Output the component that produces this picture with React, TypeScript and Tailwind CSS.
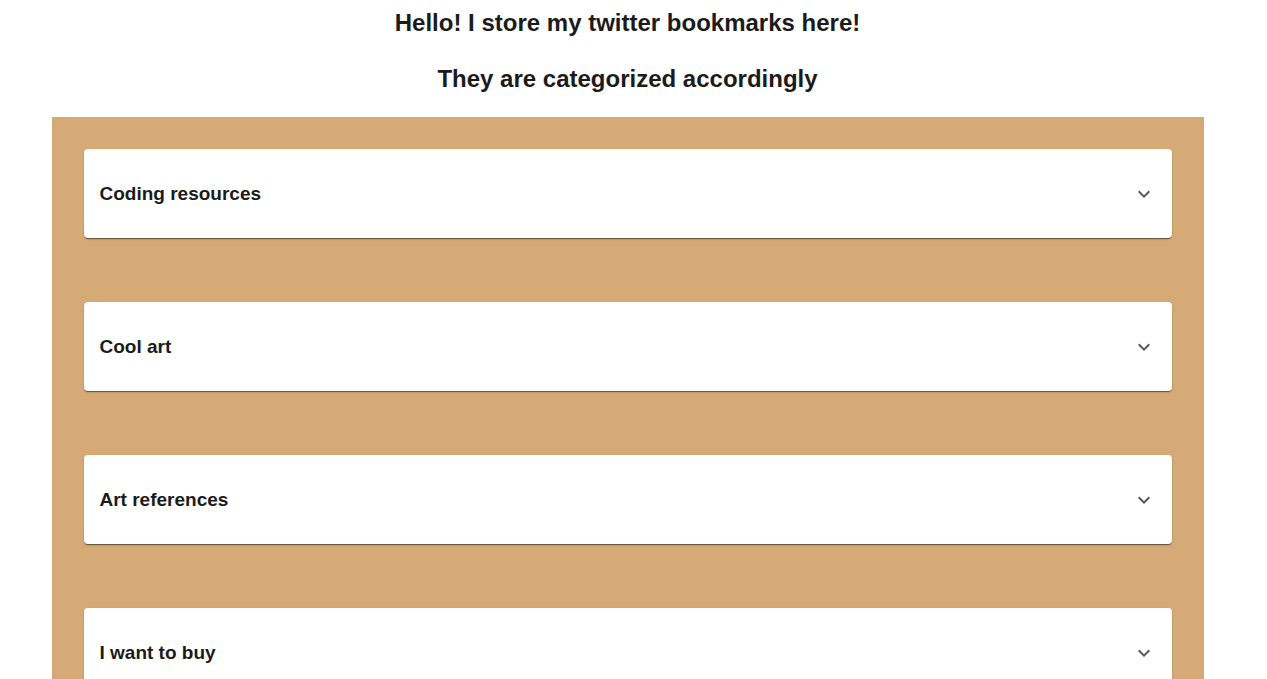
import { useState } from "react";

const categories = [
  { title: "Coding resources", note: "Articles, tools and threads about coding." },
  { title: "Cool art", note: "Art worth another look." },
  { title: "Art references", note: "Poses, palettes and studies." },
  { title: "I want to buy", note: "Things for the wish list." },
];

function Panel({ title, note, id }: { title: string; note: string; id: string }) {
  const [open, setOpen] = useState(false);
  return (
    <section className="rounded-sm bg-white shadow-[0_2px_1px_-1px_rgba(0,0,0,0.3),0_1px_1px_0_rgba(0,0,0,0.24),0_1px_3px_0_rgba(0,0,0,0.12)]">
      <h3>
        <button
          type="button"
          aria-expanded={open}
          aria-controls={id}
          onClick={() => setOpen(!open)}
          className="flex w-full cursor-pointer items-center justify-between px-4 py-8 text-left text-[19px] leading-[25px] font-bold"
        >
          {title}
          <svg
            viewBox="0 0 24 24"
            aria-hidden="true"
            className={open ? "size-6 rotate-180 fill-black/65" : "size-6 fill-black/65"}
          >
            <path d="M16.59 8.59 12 13.17 7.41 8.59 6 10l6 6 6-6z" />
          </svg>
        </button>
      </h3>
      <p id={id} hidden={!open} className="px-4 pb-4 text-base">
        {note}
      </p>
    </section>
  );
}

export default function App() {
  return (
    <div className="min-h-screen bg-white pr-3 font-['Liberation_Sans',Arial,sans-serif] text-[#1b1b1b]">
      <header className="flex flex-col gap-6 pt-[7px] pb-[22px] text-center text-2xl font-bold">
        <h1>Hello! I store my twitter bookmarks here!</h1>
        <h2>They are categorized accordingly</h2>
      </header>
      <main className="mx-auto flex max-w-6xl flex-col gap-16 bg-[#d5aa76] p-8">
        {categories.map((c, i) => (
          <Panel key={c.title} id={`panel-${i}`} title={c.title} note={c.note} />
        ))}
      </main>
    </div>
  );
}
